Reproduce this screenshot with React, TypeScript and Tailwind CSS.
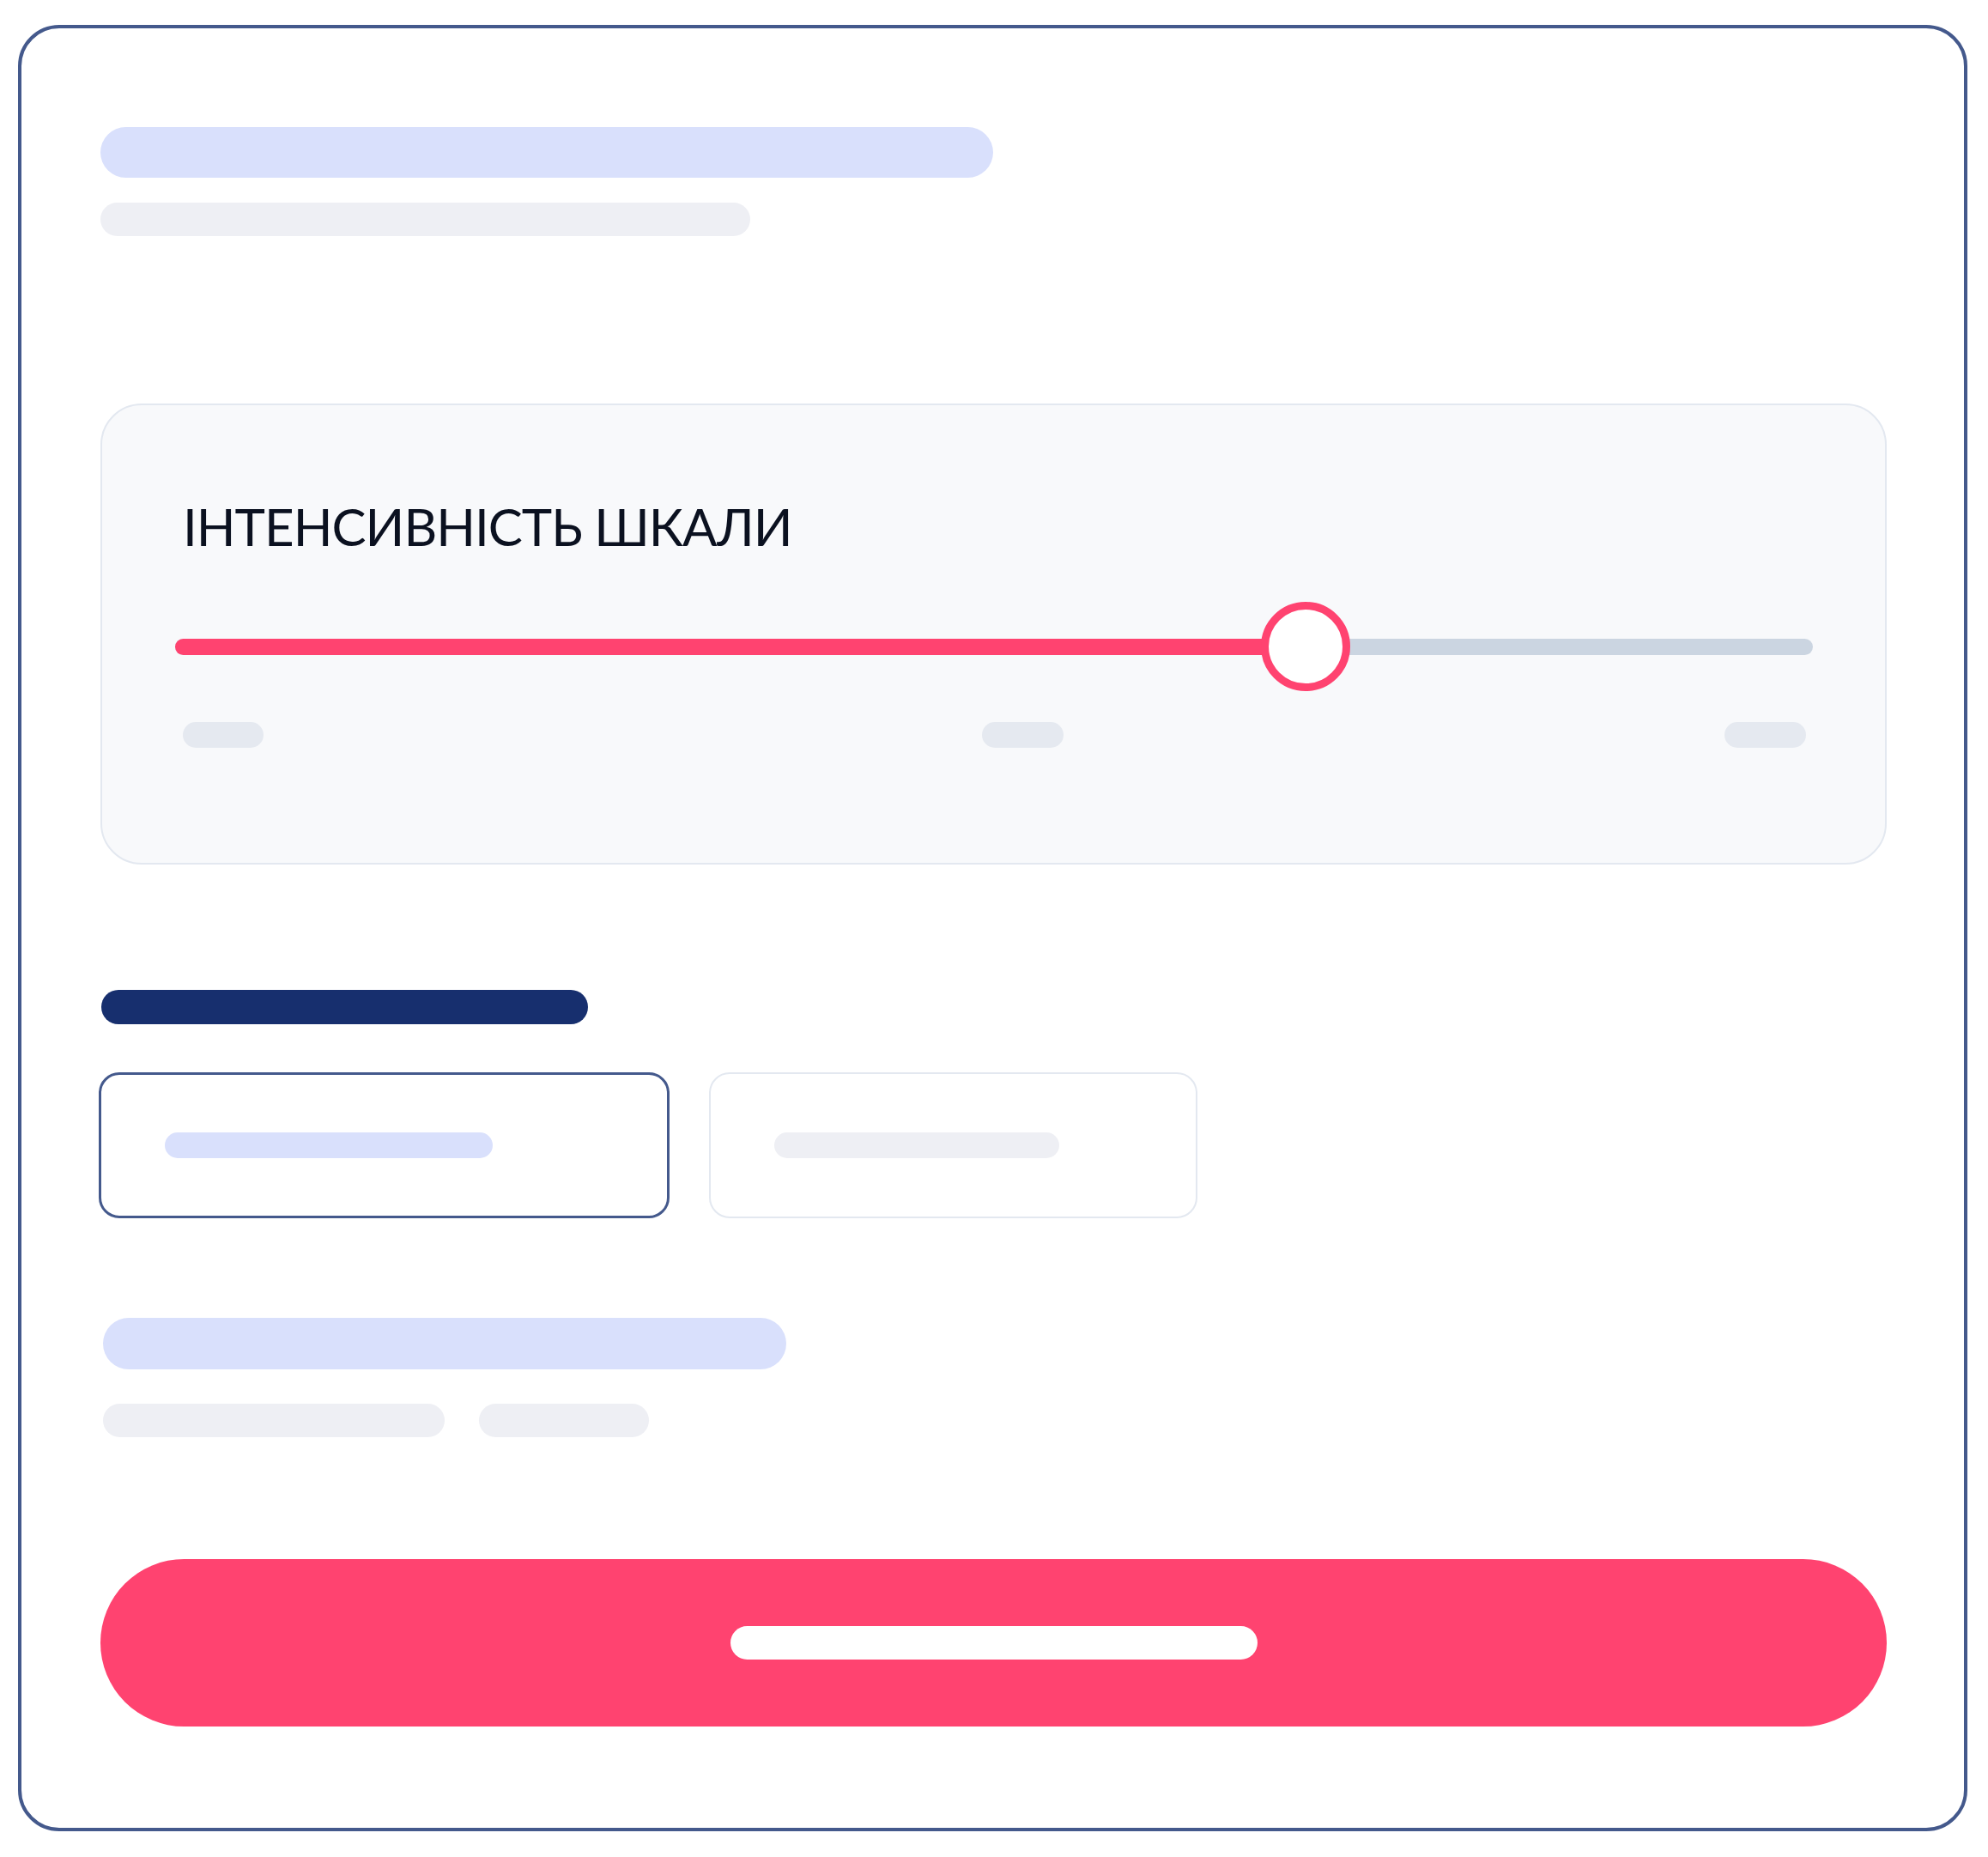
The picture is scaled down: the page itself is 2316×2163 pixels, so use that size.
import React from 'react';

const value = 69; // percent along the track

function Pill({ className }: { className: string }) {
  return <div className={`rounded-full ${className}`} />;
}

export default function App() {
  return (
    <div className="min-h-screen bg-white pt-[29px] pl-[21px]">
      <div className="box-border w-[2271px] rounded-[48px] border-4 border-[#44598c] bg-white pt-[115px] pb-[118px] pl-[92px] pr-[90px]">
        {/* Header placeholders */}
        <Pill className="h-[59px] w-[1040px] bg-[#d9e0fc]" />
        <Pill className="mt-[29px] h-[39px] w-[757px] bg-[#eeeff4]" />

        {/* Slider panel */}
        <div className="mt-[195px] box-border h-[537px] rounded-[48px] border-2 border-[#e3e8f0] bg-[#f8f9fb] pt-[111px]">
          <div
            className="pl-[94px] text-[60px] leading-none tracking-[-1px] text-[#0b1120]"
            style={{ fontFamily: 'Lato, "Open Sans", sans-serif' }}
          >
            ІНТЕНСИВНІСТЬ ШКАЛИ
          </div>

          <div className="mt-[58px] flex h-[104px] items-center pl-[85px] pr-[84px]">
            <div className="relative h-[19px] w-full rounded-full bg-[#cbd5e1]">
              <div className="h-full rounded-full bg-[#ff4370]" style={{ width: `${value}%` }} />
              <div
                className="absolute top-1/2 box-border h-[104px] w-[104px] -translate-x-1/2 -translate-y-1/2 rounded-full border-[9px] border-[#ff4370] bg-white"
                style={{ left: `${value}%` }}
              />
            </div>
          </div>

          <div className="mt-[36px] flex pl-[94px]">
            <Pill className="h-[30px] w-[94px] bg-[#e5e9f0]" />
            <Pill className="ml-[837px] h-[30px] w-[95px] bg-[#e5e9f0]" />
            <Pill className="ml-[770px] h-[30px] w-[95px] bg-[#e5e9f0]" />
          </div>
        </div>

        {/* Option group */}
        <Pill className="mt-[146px] ml-px h-[40px] w-[567px] bg-[#172f6e]" />
        <div className="mt-[56px] -ml-[2px] flex gap-[46px]">
          <div className="box-border flex h-[170px] w-[665px] items-center rounded-[24px] border-[3px] border-[#44598c] bg-white pl-[74px]">
            <Pill className="h-[30px] w-[382px] bg-[#d9e0fc]" />
          </div>
          <div className="box-border flex h-[170px] w-[569px] items-center rounded-[24px] border-2 border-[#e3e8f0] bg-white pl-[74px]">
            <Pill className="h-[30px] w-[332px] bg-[#eeeff4]" />
          </div>
        </div>

        {/* Summary placeholders */}
        <Pill className="mt-[116px] ml-[3px] h-[60px] w-[796px] bg-[#d9e0fc]" />
        <div className="mt-[40px] ml-[3px] flex gap-[40px]">
          <Pill className="h-[39px] w-[398px] bg-[#eeeff4]" />
          <Pill className="h-[39px] w-[198px] bg-[#eeeff4]" />
        </div>

        {/* Primary button */}
        <button className="mt-[142px] flex h-[195px] w-full items-center justify-center rounded-full bg-[#ff4370]">
          <span className="block h-[39px] w-[614px] rounded-full bg-white" />
        </button>
      </div>
    </div>
  );
}
